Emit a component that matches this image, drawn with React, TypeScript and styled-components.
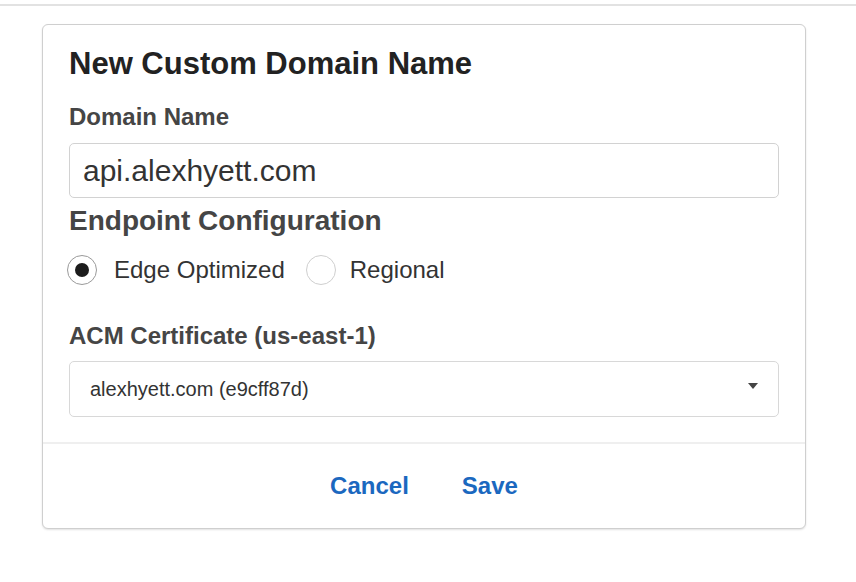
import React from "react";
import styled, { createGlobalStyle } from "styled-components";

const Global = createGlobalStyle`
  html, body { margin: 0; padding: 0; background: #ffffff; }
  body { font-family: "Liberation Sans", Arial, sans-serif; }
  * { box-sizing: border-box; }
`;

const Page = styled.div`
  width: 856px;
  height: 582px;
  padding-top: 4px;
  overflow: hidden;
`;

const TopRule = styled.div`
  height: 2px;
  background: #e2e2e2;
`;

const Card = styled.div`
  margin: 18px 0 0 42px;
  width: 764px;
  border: 1px solid #cfcfcf;
  border-radius: 6px;
  box-shadow: 0 1px 2px rgba(0, 0, 0, 0.12);
  background: #fff;
`;

const Body = styled.div`
  padding: 21px 26px 0 26px;
  display: flex;
  flex-direction: column;
`;

const Title = styled.h2`
  margin: 0;
  font-size: 31px;
  line-height: 36px;
  font-weight: 700;
  color: #222;
`;

const Label = styled.div<{ $top: number; $size?: number }>`
  margin-top: ${(p) => p.$top}px;
  font-size: ${(p) => p.$size ?? 24}px;
  line-height: ${(p) => (p.$size ?? 24) + 4}px;
  font-weight: 700;
  color: #454545;
`;

const TextInput = styled.input`
  margin-top: 12px;
  height: 55px;
  width: 100%;
  border: 1px solid #d2d2d2;
  border-radius: 5px;
  padding: 0 13px;
  font-family: "Liberation Sans", Arial, sans-serif;
  font-size: 30px;
  color: #333;
  outline: none;
`;

const RadioRow = styled.div`
  margin-top: 18px;
  display: flex;
  align-items: center;
  height: 30px;
  margin-left: -2px;
`;

const RadioOption = styled.label<{ $gap: number }>`
  display: flex;
  align-items: center;
  gap: ${(p) => p.$gap}px;
  margin-right: 21px;
  font-size: 24px;
  color: #333;
`;

const RadioCircle = styled.span<{ $checked: boolean }>`
  width: 30px;
  height: 30px;
  border-radius: 50%;
  border: 1.5px solid ${(p) => (p.$checked ? "#9a9a9a" : "#cfcfcf")};
  display: flex;
  align-items: center;
  justify-content: center;
  &::after {
    content: "";
    display: ${(p) => (p.$checked ? "block" : "none")};
    width: 14px;
    height: 14px;
    border-radius: 50%;
    background: #1c1c1c;
  }
`;

const Select = styled.div`
  margin-top: 11px;
  height: 56px;
  border: 1px solid #d8d8d8;
  border-radius: 5px;
  padding: 0 20px;
  display: flex;
  align-items: center;
  justify-content: space-between;
  font-size: 20px;
  color: #333;
`;

const Caret = styled.span`
  width: 0;
  height: 0;
  border-left: 5px solid transparent;
  border-right: 5px solid transparent;
  border-top: 6px solid #444;
  margin-top: -6px;
`;

const Footer = styled.div`
  margin-top: 25px;
  border-top: 2px solid #efefef;
  padding: 28px 0 28px;
  display: flex;
  justify-content: center;
  gap: 53px;
`;

const LinkButton = styled.button`
  border: none;
  background: none;
  padding: 0;
  font-family: "Liberation Sans", Arial, sans-serif;
  font-size: 24px;
  line-height: 28px;
  font-weight: 700;
  color: #1b68bf;
  cursor: pointer;
`;

export default function App() {
  return (
    <Page>
      <Global />
      <TopRule />
      <Card>
        <Body>
          <Title>New Custom Domain Name</Title>
          <Label $top={21}>Domain Name</Label>
          <TextInput defaultValue="api.alexhyett.com" />
          <Label $top={7} $size={28}>
            Endpoint Configuration
          </Label>
          <RadioRow>
            <RadioOption $gap={17}>
              <RadioCircle $checked={true} />
              Edge Optimized
            </RadioOption>
            <RadioOption $gap={14}>
              <RadioCircle $checked={false} />
              Regional
            </RadioOption>
          </RadioRow>
          <Label $top={37}>ACM Certificate (us-east-1)</Label>
          <Select>
            <span>alexhyett.com (e9cff87d)</span>
            <Caret />
          </Select>
        </Body>
        <Footer>
          <LinkButton>Cancel</LinkButton>
          <LinkButton>Save</LinkButton>
        </Footer>
      </Card>
    </Page>
  );
}
